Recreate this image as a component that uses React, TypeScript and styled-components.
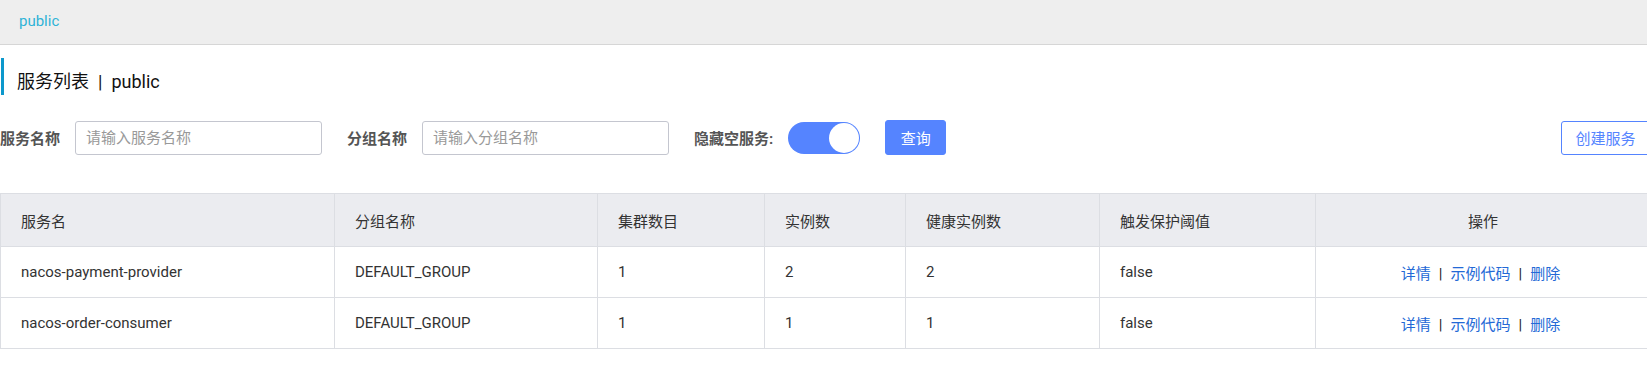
import styled, { createGlobalStyle } from "styled-components";

const GlobalStyle = createGlobalStyle`
  html, body {
    margin: 0;
    padding: 0;
    background: #fff;
    overflow: hidden;
  }
  body {
    font-family: Roboto, "Noto Sans CJK SC", sans-serif;
    font-size: 15px;
    color: #333;
  }
`;

const Page = styled.div`
  width: 1650px;
`;
const TopBar = styled.div`
  box-sizing: border-box;
  height: 45px;
  display: flex;
  align-items: center;
  padding: 0 0 2px 19px;
  background-color: #eeeeee;
  border-bottom: 1px solid #d6d6d6;
`;
const Namespace = styled.span`
  font-size: 15px;
  color: #2fb3d7;
`;
const Title = styled.h1`
  box-sizing: border-box;
  height: 37px;
  margin: 13px 0 0 1px;
  padding: 12px 0 0 13px;
  border-left: 3px solid #0c98cc;
  font-size: 18px;
  font-weight: 400;
  line-height: 24px;
  color: #111;
`;
const Sep = styled.span`
  margin: 0 9px;
`;
const FilterBar = styled.div`
  display: flex;
  align-items: center;
  height: 35px;
  margin-top: 25px;
`;
const Label = styled.label<{ $gap: number }>`
  margin-left: ${(p) => p.$gap}px;
  margin-right: 15px;
  font-size: 15px;
  font-weight: 700;
  color: #555;
  white-space: nowrap;
`;
const Input = styled.input`
  box-sizing: border-box;
  width: 247px;
  height: 34px;
  padding: 0 10px;
  border: 1px solid #c4c6cf;
  border-radius: 3px;
  font-family: inherit;
  font-size: 15px;
  outline: none;
  &::placeholder {
    color: #999;
  }
`;
const Switch = styled.div<{ $on: boolean }>`
  position: relative;
  flex: none;
  width: 72px;
  height: 32px;
  border-radius: 16px;
  background-color: ${(p) => (p.$on ? "#5584ff" : "#c4c6cf")};
`;
const Knob = styled.span<{ $on: boolean }>`
  position: absolute;
  top: 1px;
  ${(p) => (p.$on ? "right: 1px;" : "left: 1px;")}
  width: 30px;
  height: 30px;
  border-radius: 50%;
  background-color: #fff;
`;
const Button = styled.button<{ $primary?: boolean }>`
  box-sizing: border-box;
  flex: none;
  height: ${(p) => (p.$primary ? 35 : 34)}px;
  padding: 0;
  border: 1px solid #5584ff;
  border-radius: 3px;
  background-color: ${(p) => (p.$primary ? "#5584ff" : "#fff")};
  color: ${(p) => (p.$primary ? "#fff" : "#5584ff")};
  font-family: inherit;
  font-size: 15px;
  white-space: nowrap;
  cursor: pointer;
`;
const QueryButton = styled(Button)`
  margin-left: 25px;
  width: 61px;
`;
const CreateButton = styled(Button)`
  margin-left: auto;
  width: 89px;
`;
const Table = styled.table`
  width: 1650px;
  margin-top: 38px;
  border-collapse: collapse;
  table-layout: fixed;
  font-size: 15px;
`;
const Th = styled.th<{ $center?: boolean }>`
  height: 52px;
  padding: 0 0 0 ${(p) => (p.$center ? 0 : 20)}px;
  background-color: #ebecf0;
  border: 1px solid #dcdee3;
  font-weight: 400;
  color: #333;
  text-align: ${(p) => (p.$center ? "center" : "left")};
`;
const Td = styled.td<{ $center?: boolean }>`
  height: 50px;
  padding: 0 0 0 ${(p) => (p.$center ? 0 : 20)}px;
  border: 1px solid #dcdee3;
  color: #333;
  text-align: ${(p) => (p.$center ? "center" : "left")};
`;
const Actions = styled.span`
  display: inline-block;
  margin-right: 5px;
`;
const Link = styled.a`
  color: #2369d6;
  text-decoration: none;
  cursor: pointer;
`;
const Bar = styled.span`
  margin: 0 8px;
  color: #222;
`;

const widths = [334, 263, 167, 141, 194, 216, 335];
const headers = ["服务名", "分组名称", "集群数目", "实例数", "健康实例数", "触发保护阈值"];
const rows = [
  ["nacos-payment-provider", "DEFAULT_GROUP", "1", "2", "2", "false"],
  ["nacos-order-consumer", "DEFAULT_GROUP", "1", "1", "1", "false"],
];

export default function App() {
  return (
    <Page>
      <GlobalStyle />
      <TopBar>
        <Namespace>public</Namespace>
      </TopBar>
      <Title>
        服务列表<Sep>|</Sep>public
      </Title>
      <FilterBar>
        <Label $gap={0}>服务名称</Label>
        <Input placeholder="请输入服务名称" />
        <Label $gap={25}>分组名称</Label>
        <Input placeholder="请输入分组名称" />
        <Label $gap={25}>隐藏空服务:</Label>
        <Switch $on>
          <Knob $on />
        </Switch>
        <QueryButton $primary>查询</QueryButton>
        <CreateButton>创建服务</CreateButton>
      </FilterBar>
      <Table>
        <colgroup>
          {widths.map((w, i) => (
            <col key={i} style={{ width: w }} />
          ))}
        </colgroup>
        <thead>
          <tr>
            {headers.map((h) => (
              <Th key={h}>{h}</Th>
            ))}
            <Th $center>操作</Th>
          </tr>
        </thead>
        <tbody>
          {rows.map((r) => (
            <tr key={r[0]}>
              {r.map((c, i) => (
                <Td key={i}>{c}</Td>
              ))}
              <Td $center>
                <Actions>
                  <Link>详情</Link>
                  <Bar>|</Bar>
                  <Link>示例代码</Link>
                  <Bar>|</Bar>
                  <Link>删除</Link>
                </Actions>
              </Td>
            </tr>
          ))}
        </tbody>
      </Table>
    </Page>
  );
}
